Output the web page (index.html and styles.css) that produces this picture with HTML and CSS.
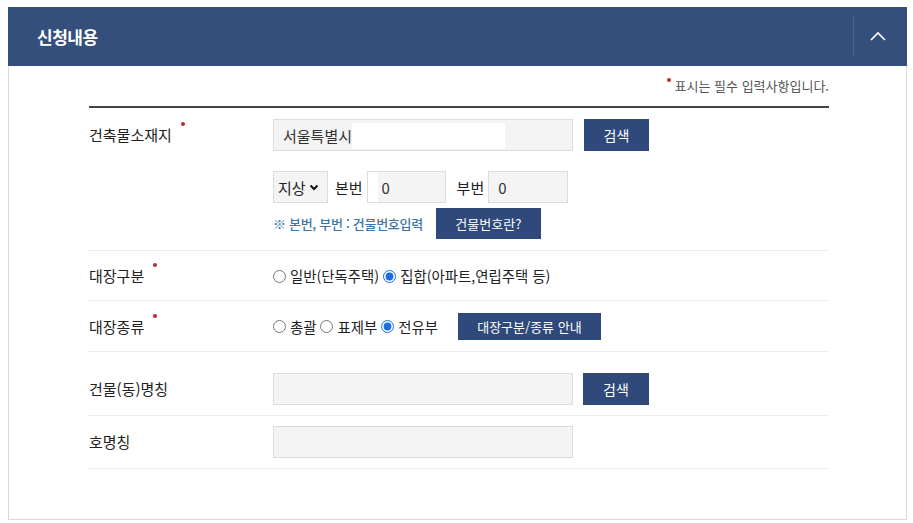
FILE: index.html
```html
<!DOCTYPE html>
<html lang="ko">
<head>
    <meta charset="UTF-8">
    <meta name="viewport" content="width=device-width, initial-scale=1.0">
    <title>신청내용</title>
    <link rel="stylesheet" href="styles.css">
</head>
<body>
    <div class="panel">
        <div class="panel-head">
            <h2 class="panel-title">신청내용</h2>
            <button type="button" class="toggle" aria-label="접기">
                <svg width="16" height="10" viewBox="0 0 16 10"><polyline points="1,9 8,2 15,9" fill="none" stroke="#fff" stroke-width="1.6"/></svg>
            </button>
        </div>

        <div class="panel-body">
            <p class="req-note"><span class="dot"></span>표시는 필수 입력사항입니다.</p>

            <form class="form-table">
                <div class="row row-addr">
                    <div class="label"><span class="req">건축물소재지</span></div>
                    <div class="field">
                        <div class="line">
                            <input type="text" class="input input-wide input-addr" value="서울특별시">
                            <button type="button" class="btn btn-search">검색</button>
                        </div>
                        <div class="line line-num">
                            <div class="select-box">
                                <select>
                                    <option>지상</option>
                                    <option>지하</option>
                                </select>
                                <svg width="10" height="7" viewBox="0 0 10 7"><polyline points="1.5,1.5 5,5 8.5,1.5" fill="none" stroke="#111" stroke-width="2"/></svg>
                            </div>
                            <label class="num-label">본번</label>
                            <input type="text" class="input input-num input-main" value="0">
                            <label class="num-label sub">부번</label>
                            <input type="text" class="input input-num" value="0">
                        </div>
                        <div class="line line-help">
                            <span class="help">※ 본번, 부번 : 건물번호입력</span>
                            <button type="button" class="btn btn-help">건물번호란?</button>
                        </div>
                    </div>
                </div>

                <div class="row row-radio">
                    <div class="label"><span class="req">대장구분</span></div>
                    <div class="field radios">
                        <label class="radio"><input type="radio" name="gubun">일반(단독주택)</label>
                        <label class="radio"><input type="radio" name="gubun" checked>집합(아파트,연립주택 등)</label>
                    </div>
                </div>

                <div class="row row-kind">
                    <div class="label"><span class="req">대장종류</span></div>
                    <div class="field radios">
                        <label class="radio"><input type="radio" name="kind">총괄</label>
                        <label class="radio"><input type="radio" name="kind">표제부</label>
                        <label class="radio"><input type="radio" name="kind" checked>전유부</label>
                        <button type="button" class="btn btn-guide">대장구분/종류 안내</button>
                    </div>
                </div>

                <div class="row row-dong">
                    <div class="label">건물(동)명칭</div>
                    <div class="field line">
                        <input type="text" class="input input-wide">
                        <button type="button" class="btn btn-search btn-search2">검색</button>
                    </div>
                </div>

                <div class="row row-ho">
                    <div class="label">호명칭</div>
                    <div class="field line">
                        <input type="text" class="input input-wide">
                    </div>
                </div>
            </form>
        </div>
    </div>
</body>
</html>
```

FILE: styles.css
```css
body {
    margin: 0;
    background: #fff;
    font-family: "Noto Sans CJK KR", "Noto Sans", sans-serif;
    color: #222;
}

.panel {
    width: 899px;
    margin: 7px 0 0 8px;
}

.panel-head {
    display: flex;
    align-items: stretch;
    height: 59px;
    background: #354f7d;
}

.panel-title {
    flex: 1;
    margin: 0;
    padding-left: 29px;
    font-size: 17px;
    font-weight: 700;
    line-height: 59px;
    color: #fff;
    letter-spacing: -0.5px;
}

.toggle {
    width: 54px;
    margin: 9px 0 9px 0;
    padding: 0 6px 2px 0;
    border: none;
    border-left: 1px solid #4a638f;
    background: transparent;
    display: flex;
    align-items: center;
    justify-content: center;
}

.panel-body {
    border: 1px solid #d9d9d9;
    border-top: none;
    padding: 0 77px 50px 80px;
}

.req-note {
    margin: 0;
    padding-top: 10px;
    text-align: right;
    font-size: 13px;
    line-height: 20px;
    color: #555;
}

.req-note .dot {
    display: inline-block;
    width: 4px;
    height: 4px;
    border-radius: 50%;
    background: #c4262e;
    margin-right: 4px;
    vertical-align: 9px;
}

.form-table {
    margin-top: 10px;
    border-top: 2px solid #444;
}

.row {
    display: grid;
    grid-template-columns: 184px 1fr;
    border-bottom: 1px solid #ececec;
}

.row-addr { padding: 11px 0 11px; }
.row-radio { padding: 15px 0 14px; }
.row-kind { padding: 12px 0 11px; }
.row-dong { padding: 21px 0 10px; }
.row-ho { padding: 10px 0 10px; }

.label {
    font-size: 15px;
    line-height: 32px;
    color: #222;
    display: flex;
    align-items: center;
}

.row-addr .label {
    align-items: flex-start;
    padding-top: 6px;
}

.req {
    position: relative;
    line-height: 20px;
}

.req::after {
    content: "";
    position: absolute;
    right: -13px;
    top: -3px;
    width: 4px;
    height: 4px;
    border-radius: 50%;
    background: #c4262e;
}

.line {
    display: flex;
    align-items: center;
}

.line-num {
    margin-top: 20px;
}

.line-help {
    margin-top: 5px;
}

.input {
    box-sizing: border-box;
    height: 32px;
    border: 1px solid #dcdcdc;
    background: #f4f4f4;
    padding: 0 9px;
    font-family: inherit;
    font-size: 15px;
    color: #333;
    outline: none;
}

.input-wide {
    width: 300px;
}

.input-addr {
    background: linear-gradient(#fff, #fff) no-repeat 78px 3px / 153px 26px, #f4f4f4;
}

.input-num {
    width: 80px;
}

.input-main {
    width: 79px;
    padding-left: 14px;
    background: linear-gradient(#fff, #fff) no-repeat 0 0 / 10px 100%, #f4f4f4;
}

.select-box {
    box-sizing: border-box;
    display: flex;
    align-items: center;
    width: 55px;
    height: 32px;
    border: 1px solid #dcdcdc;
    background: #f4f4f4;
}

.select-box select {
    appearance: none;
    border: none;
    background: transparent;
    font-family: inherit;
    font-size: 15px;
    color: #222;
    padding: 0 0 0 4px;
    width: 35px;
    outline: none;
}

.num-label {
    font-size: 15px;
    margin: 0 4px 0 7px;
}

.num-label.sub {
    margin-left: 11px;
}

.help {
    font-size: 13px;
    font-weight: 500;
    color: #3b76a6;
    letter-spacing: -0.3px;
}

.btn {
    box-sizing: border-box;
    border: none;
    background: #2f4a7a;
    color: #fff;
    font-family: inherit;
    font-size: 13px;
    cursor: pointer;
    padding: 0;
}

.btn-search {
    width: 65px;
    height: 32px;
    margin-left: 11px;
    font-size: 14px;
}

.btn-search2 {
    width: 66px;
    margin-left: 10px;
}

.btn-help {
    width: 105px;
    height: 31px;
    margin-left: 13px;
}

.btn-guide {
    width: 143px;
    height: 27px;
    margin-left: 16px;
}

.radios {
    display: flex;
    align-items: center;
}

.radio {
    display: inline-flex;
    align-items: center;
    font-size: 14.4px;
    line-height: 20px;
    margin-right: 4px;
    color: #222;
}

.radio input {
    width: 13px;
    height: 13px;
    margin: 0 4px 0 0;
    accent-color: #1a6fe0;
}
```
